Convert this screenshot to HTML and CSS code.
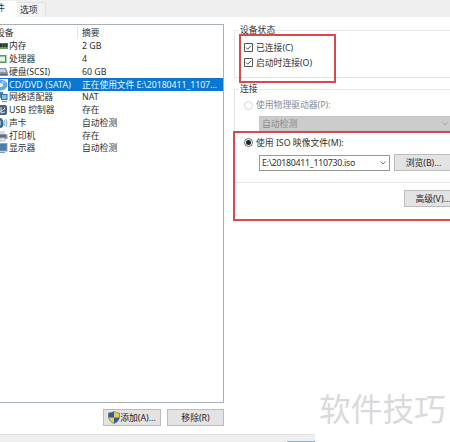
FILE: index.html
```html
<!DOCTYPE html>
<html lang="zh-CN">
<head>
<meta charset="utf-8">
<title>虚拟机设置</title>
<link rel="stylesheet" href="styles.css">
</head>
<body>
<div class="window">
  <nav class="tabs"><span class="tab active">件</span><span class="tab">选项</span></nav>
  <main class="content">
    <section class="left">
      <div class="list">
        <div class="row head"><span class="name">设备</span><span class="summary">摘要</span></div>
        <div class="row"><svg class="icon" viewBox="0 0 8 12"><path d="M0 3h8v6H0z" fill="#3e7a43"/><path d="M0 4h2v3H0zM3 4h1.5v3H3zM5.5 4H7v3H5.5z" fill="#26332c"/><path d="M0 8h8" stroke="#94b77a"/></svg><span class="name">内存</span><span class="summary">2 GB</span></div>
        <div class="row"><svg class="icon" viewBox="0 0 8 12"><path d="M0 2h6.5v8H0z" fill="#4b9a61"/><path d="M0 3.5h5v5H0z" fill="#e5efe6"/></svg><span class="name">处理器</span><span class="summary">4</span></div>
        <div class="row"><svg class="icon" viewBox="0 0 8 12"><path d="M0 2h6l2 5v3H0z" fill="#8b94a5"/><path d="M0 3h5l1 3H0z" fill="#c8ced8"/><path d="M0 8.5h7" stroke="#56657b"/></svg><span class="name">硬盘(SCSI)</span><span class="summary">60 GB</span></div>
        <div class="row selected"><svg class="icon" viewBox="0 0 8 12"><path d="M0 .5a7.5 5.5 0 0 1 0 11z" fill="#6aaadb"/><path d="M0 4a3 2 0 0 1 0 4z" fill="#e8f3fb"/><path d="M2 2l3 1-3 2z" fill="#a4d0ef"/></svg><span class="name">CD/DVD (SATA)</span><span class="summary file">正在使用文件 E:\20180411_1107...</span></div>
        <div class="row"><svg class="icon" viewBox="0 0 8 12"><path d="M0 1h3v6H0z" fill="#4b80ae"/><path d="M1 3h6.500v6H1z" fill="#346f9f"/><path d="M2 4h4.500v4H2z" fill="#80c4e8"/><path d="M2 10.500h5" stroke="#7899b0"/></svg><span class="name">网络适配器</span><span class="summary">NAT</span></div>
        <div class="row"><svg class="icon" viewBox="0 0 8 12"><rect x="-3" y="1" width="10" height="10" rx="2" fill="#4e6378"/><path d="M1 9V3M1 7l3.500-2V3.500M1 8L0 6.500M1 9l4-1" fill="none" stroke="#d4e1ea"/></svg><span class="name">USB 控制器</span><span class="summary">存在</span></div>
        <div class="row"><svg class="icon" viewBox="0 0 8 12"><path d="M0 1q3 0 3.500 5T0 11z" fill="#40688a"/><path d="M0 3q2 3 0 6z" fill="#a9c3d5"/><path d="M4.300 3q1.500 3 0 6M6 2q2 4 0 8" fill="none" stroke="#78b0da"/></svg><span class="name">声卡</span><span class="summary">自动检测</span></div>
        <div class="row"><svg class="icon" viewBox="0 0 8 12"><path d="M0 1h5v4H0z" fill="#d8dee8"/><path d="M0 4h6l1.500 1v4H0z" fill="#8d93a5"/><path d="M0 6h6" stroke="#3d4657"/><path d="M0 8h5v3H0z" fill="#eceff4" stroke="#8b92a0" stroke-width=".6"/></svg><span class="name">打印机</span><span class="summary">存在</span></div>
        <div class="row"><svg class="icon" viewBox="0 0 8 12"><path d="M0 1h7.500v8.500H0z" fill="#88a3bd"/><path d="M0 2h6.500v6.500H0z" fill="#4b7dad"/><path d="M0 10.500h5" stroke="#8a9cae"/></svg><span class="name">显示器</span><span class="summary">自动检测</span></div>
      </div>
      <div class="actions">
        <button class="btn add"><svg class="shield" viewBox="0 0 12 13"><path d="M6 .5Q8.500 2 11.500 2V6Q11 10.500 6 12.500Q1 10.500 .5 6V2Q3.500 2 6 .5z" fill="#efc75a"/><path d="M6 .5Q3.500 2 .5 2V6.500H6zM6 6.500V12.500Q10.500 11 11.400 6.500z" fill="#295f95"/><path d="M6 .5Q8.500 2 11.500 2V6Q11 10.500 6 12.500Q1 10.500 .5 6V2Q3.500 2 6 .5z" fill="none" stroke="#55738b" stroke-width=".7"/></svg><span>添加(A)...</span></button>
        <button class="btn remove">移除(R)</button>
      </div>
    </section>
    <section class="right">
      <fieldset class="group status">
        <legend>设备状态</legend>
        <label class="check"><svg class="box" viewBox="0 0 9 9"><path d="M.5.5h8v8h-8z" fill="#fff" stroke="#555"/><path d="M2 4.500l1.700 1.700L7 2.700" fill="none" stroke="#333" stroke-width=".9"/></svg><span>已连接(C)</span></label>
        <label class="check"><svg class="box" viewBox="0 0 9 9"><path d="M.5.5h8v8h-8z" fill="#fff" stroke="#555"/><path d="M2 4.500l1.700 1.700L7 2.700" fill="none" stroke="#333" stroke-width=".9"/></svg><span>启动时连接(O)</span></label>
      </fieldset>
      <fieldset class="group connection">
        <legend>连接</legend>
        <label class="check physical"><svg class="box" viewBox="0 0 9 9"><circle cx="4.500" cy="4.500" r="4" fill="#fff" stroke="#ccc" stroke-width=".8"/></svg><span>使用物理驱动器(P):</span></label>
        <div class="select disabled"><span>自动检测</span><svg class="arrow" viewBox="0 0 6 4"><path d="M.5.5L3 3 5.500.5" fill="none" stroke="#999" stroke-width=".8"/></svg></div>
        <label class="check iso"><svg class="box" viewBox="0 0 9 9"><circle cx="4.500" cy="4.500" r="4" fill="#fff" stroke="#444" stroke-width=".8"/><circle cx="4.500" cy="4.500" r="2.500" fill="#222"/></svg><span>使用 ISO 映像文件(M):</span></label>
        <div class="file-line"><div class="select path"><span>E:\20180411_110730.iso</span><svg class="arrow" viewBox="0 0 6 4"><path d="M.5.5L3 3 5.500.5" fill="none" stroke="#555" stroke-width=".8"/></svg></div><button class="btn browse">浏览(B)...</button></div>
      </fieldset>
      <button class="btn advanced">高级(V)...</button>
    </section>
  </main>
  <footer class="footer"><span class="ok"></span></footer>
  <div class="mark mark-status"></div>
  <div class="mark mark-iso"></div>
  <div class="watermark">软件技巧</div>
</div>
</body>
</html>
```
FILE: styles.css
```css
* { box-sizing: border-box; }
body { margin: 0; overflow: hidden; }
.window {
  position: relative;
  display: flex;
  flex-direction: column;
  width: 450px;
  height: 442px;
  overflow: hidden;
  background: #fff;
  color: #303030;
  font: 8.8px/12px "Noto Sans", "Noto Sans CJK SC", sans-serif;
  white-space: nowrap;
}
.tabs { display: flex; flex: none; height: 17px; background: #efefef; }
.tab { height: 15px; width: 29px; margin-top: 2px; padding: 1px 0 0 3px; border: 1px solid #e2e2e2; border-width: 1px 1px 0 0; background: #f2f2f2; }
.tab.active { width: 17px; height: 16px; margin-top: 1px; padding: 1px 0 0; border: 0; background: #fff; text-indent: -4px; overflow: hidden; }
.content { display: flex; flex: 1; min-height: 0; }
.left { width: 224px; }
.list { height: 379px; margin-top: 7px; width: 224px; padding-top: 1px; border: 1px solid #a7afb7; border-left: 0; }
.row { display: flex; align-items: center; height: 12.75px; }
.row.head { height: 13px; margin-bottom: 1px; }
.row.head .name { width: 82px; margin-left: -4px; border-right: 1px solid #e5e5e5; }
.row.head .summary { padding-left: 4px; }
.icon { width: 8px; height: 12px; flex: none; }
.name { width: 73px; margin-left: 1px; flex: none; }
.selected { background: #0878d1; color: #e9f5ff; }
.selected .icon { background: #fff; }
.selected .name { letter-spacing: .1px; }
.file { letter-spacing: -.08px; }
.actions { display: flex; gap: 6px; margin: 6px 0 0 103px; }
.btn {
  display: flex;
  align-items: center;
  justify-content: center;
  height: 17px;
  padding: 0;
  border: 1px solid #bcbcbc;
  background: #e3e3e3;
  color: #222;
  font: inherit;
}
.add { width: 58px; }
.remove { width: 57px; flex: none; }
.shield { width: 12px; height: 13px; flex: none; }
.right { width: 216px; margin-left: 10px; padding-top: 7px; }
.group { width: 230px; margin: 0; padding: 0 0 0 9px; border: 1px solid #e5e5e5; border-right: 0; min-width: 0; }
.group legend { margin-left: -5px; padding: 0 1px; height: 12px; }
.status { height: 54px; padding-top: 4px; }
.check { display: flex; align-items: center; gap: 3px; height: 15px; }
.box { width: 9px; height: 9px; flex: none; }
.connection { margin-top: 5px; height: 100px; }
.physical { height: 14px; margin-top: 3px; color: #888; }
.select { display: flex; align-items: center; justify-content: space-between; border: 1px solid #999; background: #fff; padding: 0 3px 0 2px; }
.arrow { width: 6px; height: 4px; }
.disabled { width: 193px; height: 15px; margin: 4px 0 0 15px; border-color: #c5c5c5; background: #ccc; color: #888; }
.iso { margin-top: 4px; }
.file-line { display: flex; align-items: center; gap: 4px; margin: 4px 0 0 15px; }
.path { width: 131px; height: 16px; letter-spacing: -.27px; }
.browse { width: 59px; flex: none; }
.advanced { width: 58px; margin: 7px 0 0 170px; }
.footer { flex: none; width: 315px; height: 8px; border-top: 1px solid #e2e2e2; background: #efefef; padding: 6px 0 0 287px; }
.ok { display: block; height: 1px; background: #92adca; }
.mark { position: absolute; border: 2px solid #d9484a; }
.mark-status { left: 239px; top: 34px; width: 97px; height: 49px; }
.mark-iso { left: 233px; top: 131px; width: 225px; height: 90px; }
.watermark { position: absolute; left: 319px; top: 385px; color: #dadada; font: 400 31.7px/44px "Noto Sans CJK SC", sans-serif; }
```
